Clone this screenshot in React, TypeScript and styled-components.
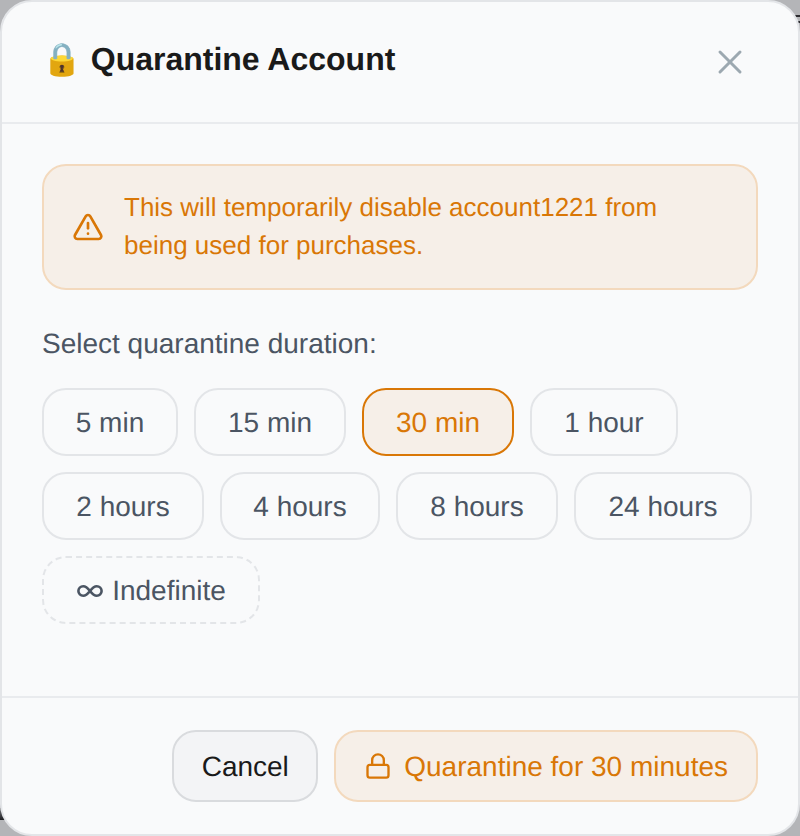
import styled, { createGlobalStyle } from "styled-components";
import { AlertTriangle, Lock, X } from "lucide-react";

const durations = [
  { label: "5 min", width: 136 },
  { label: "15 min", width: 152 },
  { label: "30 min", width: 152 },
  { label: "1 hour", width: 148 },
  { label: "2 hours", width: 162 },
  { label: "4 hours", width: 160 },
  { label: "8 hours", width: 162 },
  { label: "24 hours", width: 178 },
];
const selected = "30 min";

const App = () => {
  return (
    <>
      <GlobalStyle />
      {/* bits of the page behind the dialog that show at its corners */}
      <PeekTop />
      <PeekTopLow />
      <PeekBottom />
      <Modal>
        <Header>
          <Title>
            <span>🔒</span> Quarantine Account
          </Title>
          <CloseButton aria-label="Close">
            <X size={40} strokeWidth={1.8} />
          </CloseButton>
        </Header>
        <Body>
          <Alert>
            <AlertTriangle size={32} strokeWidth={2} />
            <AlertText>This will temporarily disable account1221 from being used for purchases.</AlertText>
          </Alert>
          <Label>Select quarantine duration:</Label>
          <Chips>
            {durations.map((d) => (
              <Chip key={d.label} $width={d.width} $active={d.label === selected}>
                {d.label}
              </Chip>
            ))}
            <Chip $width={218} $dashed>
              <InfinityIcon viewBox="0 0 28 16" width="28" height="16">
                <path d="M14 8c-2.4-3.2-4.2-4.8-6.8-4.8a4.8 4.8 0 0 0 0 9.6c2.6 0 4.4-1.6 6.8-4.8s4.2-4.8 6.8-4.8a4.8 4.8 0 0 1 0 9.6c-2.6 0-4.4-1.6-6.8-4.8z" />
              </InfinityIcon>
              Indefinite
            </Chip>
          </Chips>
        </Body>
        <Footer>
          <CancelButton>Cancel</CancelButton>
          <ConfirmButton>
            <Lock size={28} strokeWidth={2} />
            Quarantine for 30 minutes
          </ConfirmButton>
        </Footer>
      </Modal>
    </>
  );
};

export default App;

const GlobalStyle = createGlobalStyle`
  html, body {
    margin: 0;
    padding: 0;
    background: #b4b5b8;
  }
  * {
    box-sizing: border-box;
  }
  body {
    font-family: "Liberation Sans", Arial, sans-serif;
    text-rendering: geometricPrecision;
  }
  button {
    text-rendering: geometricPrecision;
  }
`;

const PeekTop = styled.div`
  position: absolute;
  top: 15px;
  left: 795px;
  width: 5px;
  height: 2px;
  background: #2c2c30;
`;

const PeekTopLow = styled(PeekTop)`
  top: 21px;
`;

const PeekBottom = styled.div`
  position: absolute;
  top: 808px;
  left: 0;
  width: 6px;
  height: 12px;
  background: linear-gradient(to bottom, #77787c, #1e1e22);
`;

const Modal = styled.div`
  position: relative;
  width: 800px;
  height: 836px;
  display: flex;
  flex-direction: column;
  background: #f9fafb;
  border: 2px solid #e3e5e8;
  border-radius: 32px;
  overflow: hidden;
`;

const Header = styled.div`
  height: 122px;
  flex-shrink: 0;
  display: flex;
  justify-content: space-between;
  align-items: flex-start;
  padding: 36px 48px 0 40px;
  border-bottom: 2px solid #e9ebee;
`;

const Title = styled.h2`
  margin: 0;
  font-size: 32px;
  line-height: 42px;
  font-weight: 700;
  color: #1a1a1a;
  white-space: nowrap;
`;

const CloseButton = styled.button`
  display: flex;
  padding: 0;
  margin: 4px 0 0;
  border: none;
  background: none;
  color: #9ca8b0;
`;

const Body = styled.div`
  flex: 1;
  padding: 40px;
`;

const Alert = styled.div`
  display: flex;
  align-items: center;
  gap: 20px;
  padding: 22px 28px;
  height: 126px;
  background: #f6efe8;
  border: 2px solid #f3d9bd;
  border-radius: 24px;
  color: #d97706;

  svg {
    flex-shrink: 0;
  }
`;

const AlertText = styled.div`
  margin-top: -2px;
  font-size: 26px;
  line-height: 38px;
`;

const Label = styled.div`
  margin: 36px 0 26px;
  font-size: 28px;
  line-height: 36px;
  color: #4b5563;
`;

const Chips = styled.div`
  display: flex;
  flex-wrap: wrap;
  gap: 16px;
`;

const Chip = styled.button<{ $width: number; $active?: boolean; $dashed?: boolean }>`
  display: flex;
  align-items: center;
  justify-content: center;
  gap: 8px;
  width: ${(p) => p.$width}px;
  height: 68px;
  padding: 2px 0 0;
  font-family: inherit;
  font-size: 28px;
  color: ${(p) => (p.$active ? "#d97706" : "#4b5563")};
  background: ${(p) => (p.$active ? "#f6efe8" : "transparent")};
  border: 2px ${(p) => (p.$dashed ? "dashed" : "solid")} ${(p) => (p.$active ? "#d97706" : "#e3e5e8")};
  border-radius: 24px;
`;

const InfinityIcon = styled.svg`
  fill: none;
  stroke: currentColor;
  stroke-width: 2.6;
`;

const Footer = styled.div`
  height: 138px;
  flex-shrink: 0;
  display: flex;
  justify-content: flex-end;
  gap: 16px;
  padding: 32px 40px;
  border-top: 2px solid #e9ebee;
`;

const CancelButton = styled.button`
  width: 146px;
  height: 72px;
  padding: 2px 0 0;
  font-family: inherit;
  font-size: 28px;
  color: #1a1a1a;
  background: #f3f4f6;
  border: 2px solid #d9dbde;
  border-radius: 24px;
`;

const ConfirmButton = styled.button`
  display: flex;
  align-items: center;
  gap: 12px;
  height: 72px;
  padding: 2px 28px 0;
  font-family: inherit;
  font-size: 28px;
  color: #d97706;
  background: #f6efe8;
  border: 2px solid #f3d9bd;
  border-radius: 24px;

  svg {
    margin-top: -2px;
  }
`;
